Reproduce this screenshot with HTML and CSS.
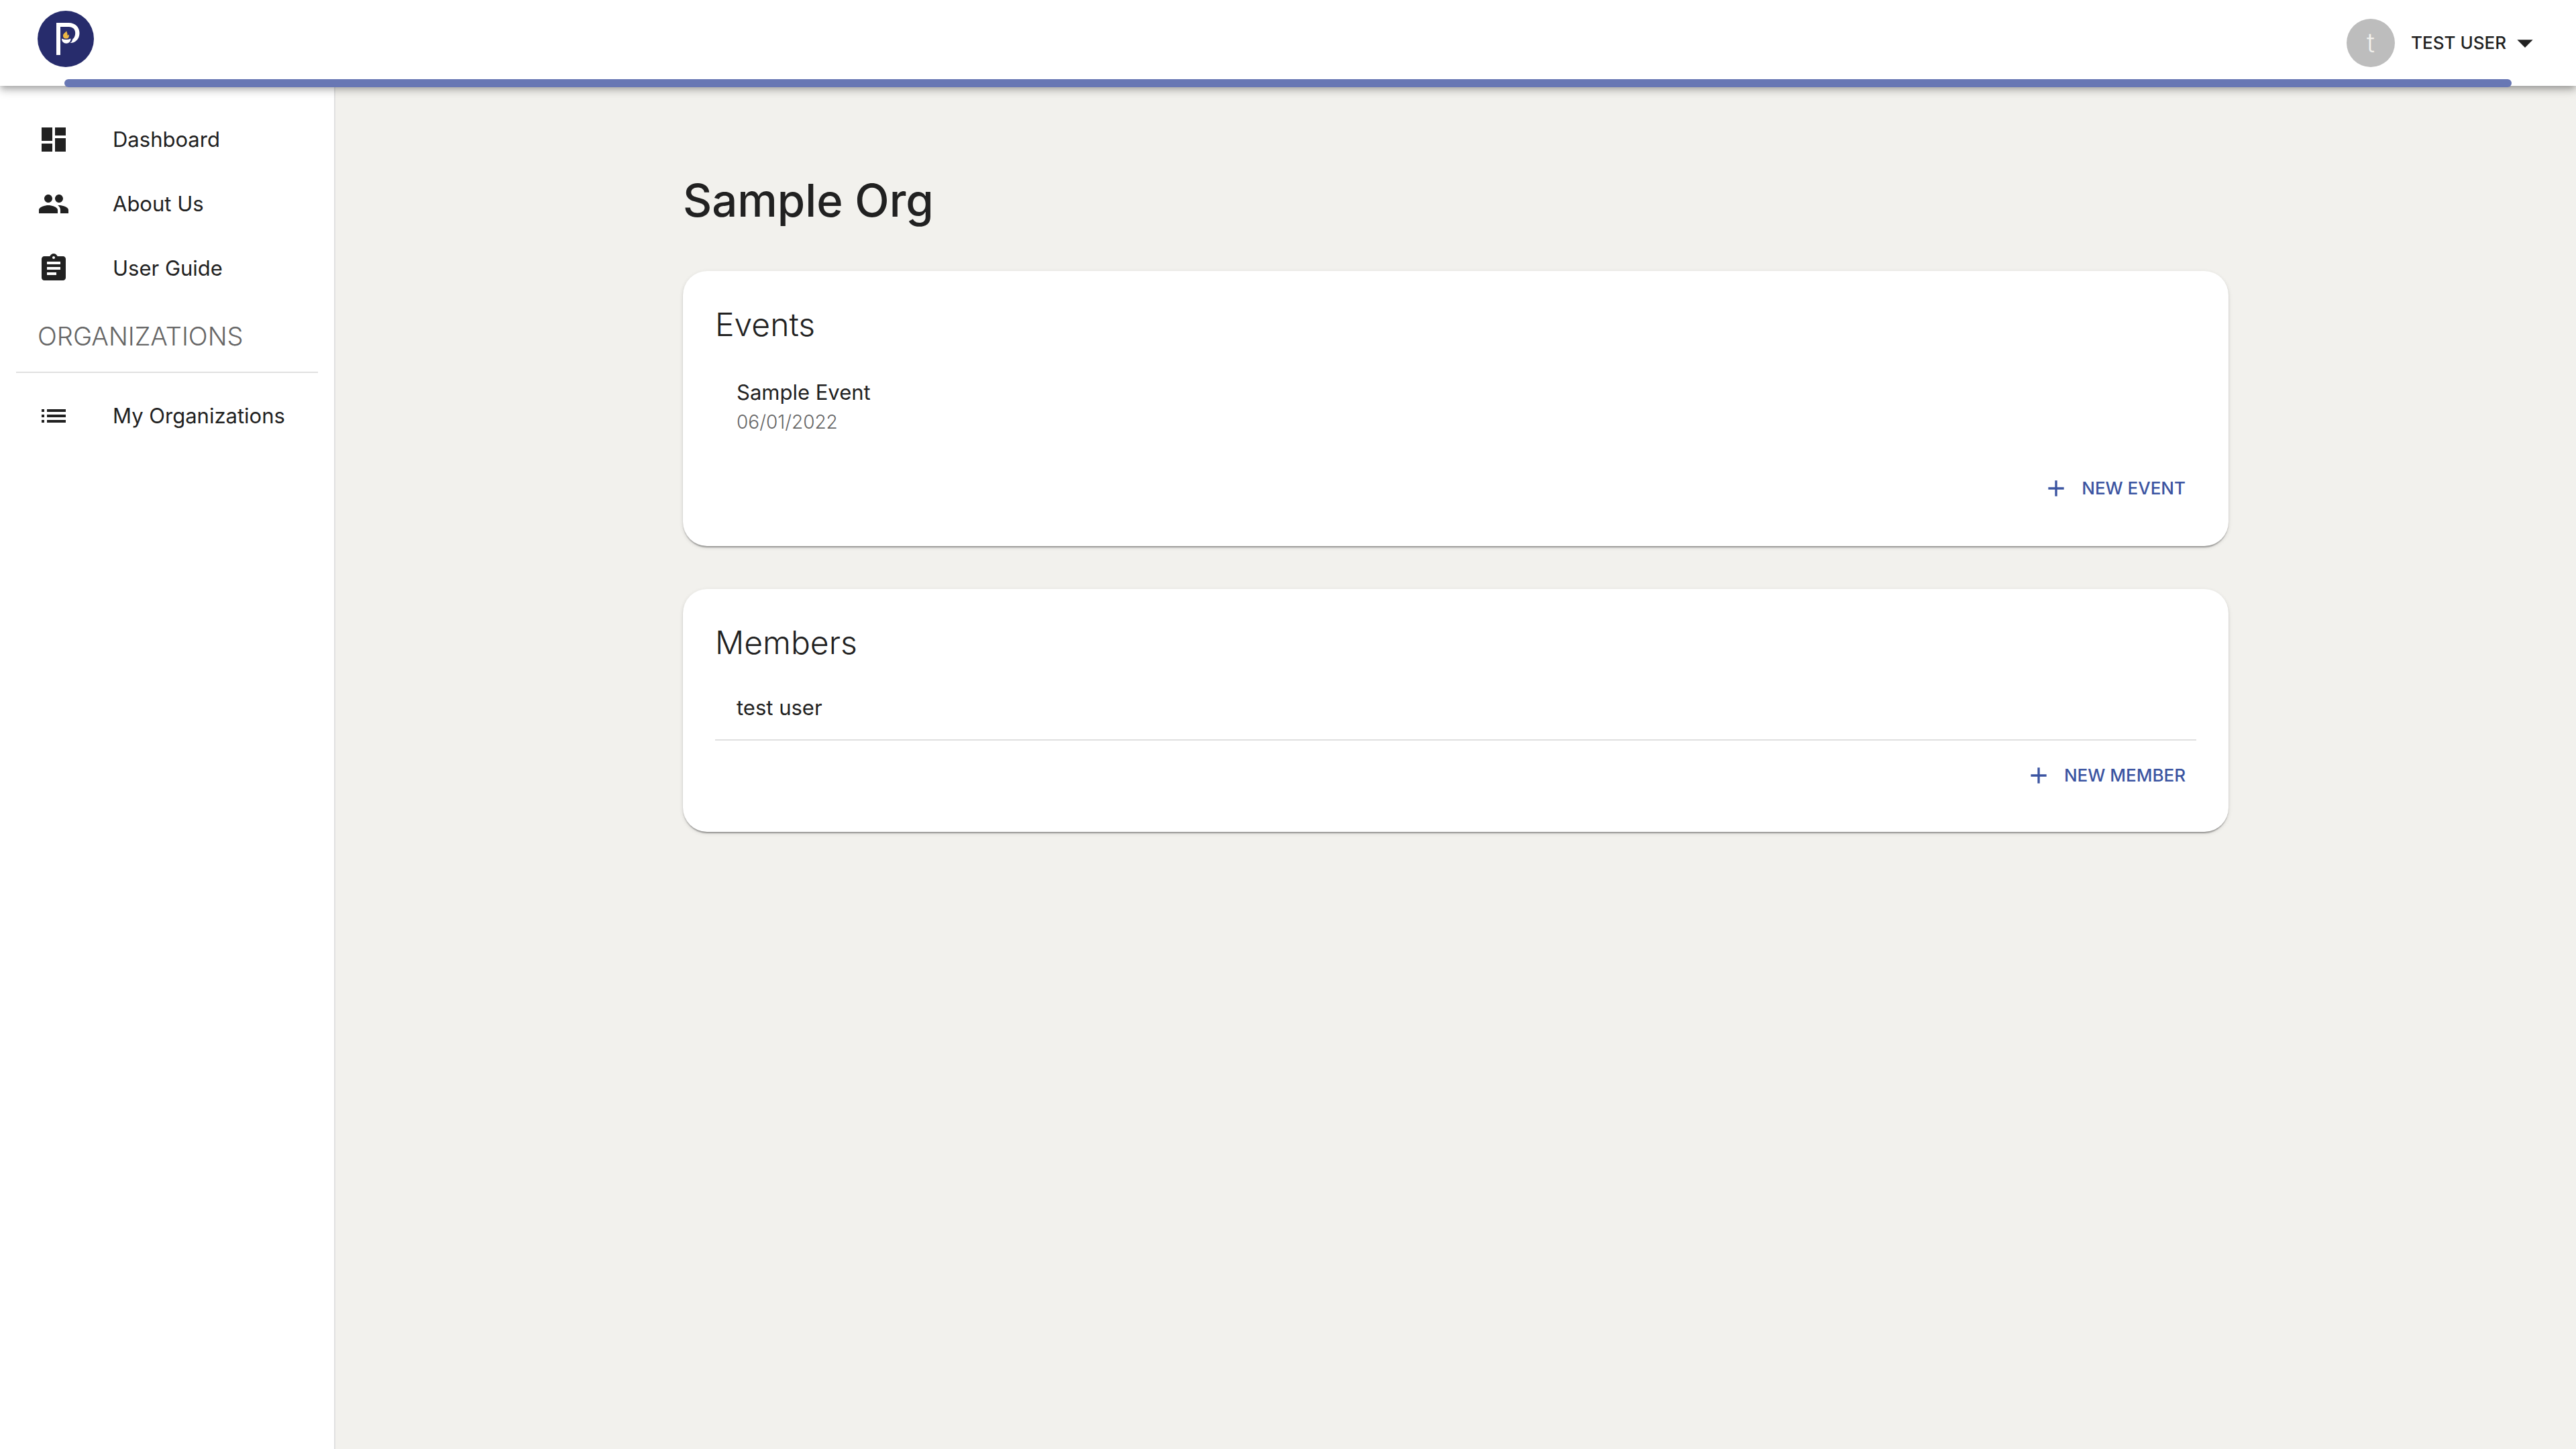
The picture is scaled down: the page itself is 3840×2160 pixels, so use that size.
FILE: index.html
```html
<!DOCTYPE html>
<html lang="en">
<head>
<meta charset="utf-8">
<title>Sample Org</title>
<link rel="stylesheet" href="styles.css">
</head>
<body>
<header class="topbar">
  <a class="logo" href="#" aria-label="Home">
    <svg viewBox="0 0 84 84" aria-hidden="true">
      <circle cx="42" cy="42" r="42" fill="#272c6c"/>
      <path fill="#fff" d="M28 18h18.500c9.500 0 16 6.500 16 15.200 0 8.800-6.200 15.300-14.200 14.800 2.600-1.100 3.300-3.400 4-5.800 2.600-1.800 3.900-5.100 3.900-9 0-5.500-3.700-9.200-9.700-9.200H34v42h-6z"/>
      <path fill="#fff" d="M36 41.500q6.500 3.200 13.500 0c0 4.500-2.800 7.200-6.700 7.200S36 46 36 41.500z"/>
      <path fill="#ecb844" d="M43 30c.6 2.800 2 3.700 1.500 6.600 1.100.2 1.700-.3 2.100-1.300.8 2.400.5 6.300-4.100 6.300-3.300 0-4.800-2.300-4.500-4.900.3-3 3.900-3.800 5-6.700z"/>
    </svg>
  </a>
  <button class="account" type="button">
    <span class="avatar">t</span>
    <span class="account-name">TEST USER</span>
    <svg class="caret" viewBox="0 0 24 24" aria-hidden="true"><path d="M7 10l5 5 5-5z"/></svg>
  </button>
  <div class="topbar-line"></div>
</header>
<div class="shell">
  <nav class="sidebar">
    <a class="nav-item" href="#">
      <svg class="nav-icon" viewBox="0 0 24 24" aria-hidden="true"><path d="M3 13h8V3H3v10zm0 8h8v-6H3v6zm10 0h8V11h-8v10zm0-18v6h8V3h-8z"/></svg>
      <span>Dashboard</span>
    </a>
    <a class="nav-item" href="#">
      <svg class="nav-icon" viewBox="0 0 24 24" aria-hidden="true"><path d="M16 11c1.660 0 2.990-1.340 2.990-3S17.660 5 16 5c-1.660 0-3 1.340-3 3s1.340 3 3 3zm-8 0c1.660 0 2.990-1.340 2.990-3S9.660 5 8 5C6.340 5 5 6.340 5 8s1.340 3 3 3zm0 2c-2.330 0-7 1.170-7 3.500V19h14v-2.500c0-2.330-4.670-3.500-7-3.500zm8 0c-.29 0-.62.020-.97.050 1.160.84 1.970 1.970 1.970 3.450V19h6v-2.500c0-2.330-4.670-3.500-7-3.500z"/></svg>
      <span>About Us</span>
    </a>
    <a class="nav-item" href="#">
      <svg class="nav-icon" viewBox="0 0 24 24" aria-hidden="true"><path d="M19 3h-4.180C14.400 1.840 13.300 1 12 1c-1.300 0-2.400.84-2.820 2H5c-1.100 0-2 .9-2 2v14c0 1.100.9 2 2 2h14c1.100 0 2-.9 2-2V5c0-1.100-.9-2-2-2zm-7 0c.55 0 1 .45 1 1s-.45 1-1 1-1-.45-1-1 .45-1 1-1zm2 14H7v-2h7v2zm3-4H7v-2h10v2zm0-4H7V7h10v2z"/></svg>
      <span>User Guide</span>
    </a>
    <h2 class="nav-heading">ORGANIZATIONS</h2>
    <a class="nav-item" href="#">
      <svg class="nav-icon" viewBox="0 0 24 24" aria-hidden="true"><path d="M3 13h2v-2H3v2zm0 4h2v-2H3v2zm0-8h2V7H3v2zm4 4h14v-2H7v2zm0 4h14v-2H7v2zM7 7v2h14V7H7z"/></svg>
      <span>My Organizations</span>
    </a>
  </nav>
  <main class="content">
    <h1 class="page-title">Sample Org</h1>
    <section class="card card-events">
      <h2 class="card-title">Events</h2>
      <ul class="list">
        <li><a class="event" href="#"><span class="event-name">Sample Event</span><span class="event-date">06/01/2022</span></a></li>
      </ul>
      <div class="actions">
        <button class="add" type="button"><svg class="add-icon" viewBox="0 0 24 24" aria-hidden="true"><path d="M19 13h-6v6h-2v-6H5v-2h6V5h2v6h6v2z"/></svg>NEW EVENT</button>
      </div>
    </section>
    <section class="card">
      <h2 class="card-title">Members</h2>
      <ul class="list">
        <li class="member">test user</li>
      </ul>
      <div class="actions">
        <button class="add" type="button"><svg class="add-icon" viewBox="0 0 24 24" aria-hidden="true"><path d="M19 13h-6v6h-2v-6H5v-2h6V5h2v6h6v2z"/></svg>NEW MEMBER</button>
      </div>
    </section>
  </main>
</div>
</body>
</html>
```
FILE: styles.css
```css
* {
  box-sizing: border-box;
}

body {
  margin: 0;
  min-height: 100vh;
  display: flex;
  flex-direction: column;
  background: #f2f1ed;
  color: #212121;
  font-family: Inter, "Open Sans", sans-serif;
  font-size: 31px;
  font-weight: 400;
  line-height: 50px;
}

a {
  color: inherit;
  text-decoration: none;
}

button {
  padding: 0;
  border: 0;
  background: none;
  font: inherit;
  color: inherit;
  cursor: pointer;
}

h1,
h2,
ul {
  margin: 0;
  padding: 0;
  font-weight: inherit;
  list-style: none;
}

svg {
  display: block;
  fill: currentColor;
}

/* Top bar */
.topbar {
  position: relative;
  z-index: 1;
  height: 128px;
  display: flex;
  align-items: center;
  justify-content: space-between;
  padding: 0 48px 0 56px;
  background: #fff;
  box-shadow: 0 4px 8px -2px rgba(0, 0, 0, 0.2), 0 8px 10px 0 rgba(0, 0, 0, 0.14), 0 2px 20px 0 rgba(0, 0, 0, 0.12);
}

.logo {
  width: 84px;
  height: 84px;
  margin-bottom: 12px;
}

.topbar-line {
  position: absolute;
  left: 96px;
  right: 96px;
  bottom: -2px;
  height: 12px;
  border-radius: 6px;
  background: #6877b4;
}

.account {
  display: flex;
  align-items: center;
  font-size: 26px;
  font-weight: 500;
}

.avatar {
  width: 72px;
  height: 72px;
  margin-right: 24px;
  border-radius: 50%;
  background: #bdbdbd;
  color: #f2f1ed;
  font-size: 40px;
  font-weight: 300;
  line-height: 72px;
  text-align: center;
}

.caret {
  width: 56px;
  height: 56px;
}

/* Page body */
.shell {
  flex: 1;
  display: flex;
}

.sidebar {
  flex: 0 0 500px;
  padding-top: 32px;
  background: #fff;
  border-right: 2px solid #e0e0e0;
}

.nav-item {
  display: flex;
  align-items: center;
  height: 96px;
  padding: 0 56px;
  gap: 64px;
  white-space: nowrap;
}

.nav-icon {
  flex: none;
  width: 48px;
  height: 48px;
}

.nav-heading {
  margin: 0 24px 16px;
  padding: 24px 32px;
  height: 108px;
  border-bottom: 2px solid #e0e0e0;
  color: #666;
  font-size: 38px;
  font-weight: 300;
  line-height: 58px;
}

.content {
  flex: 1;
  max-width: 2400px;
  margin: 0 auto;
  padding: 128px 48px;
}

.page-title {
  margin-bottom: 62px;
  font-size: 67px;
  font-weight: 500;
  line-height: 86px;
}

.card {
  padding: 48px;
  border-radius: 36px;
  background: #fff;
  box-shadow: 0 4px 2px -2px rgba(0, 0, 0, 0.2), 0 2px 2px 0 rgba(0, 0, 0, 0.14), 0 2px 6px 0 rgba(0, 0, 0, 0.12);
}

.card + .card {
  margin-top: 64px;
}

.card-events {
  padding-bottom: 50px;
}

.card-title {
  margin-bottom: 16px;
  font-size: 48px;
  font-weight: 300;
  line-height: 64px;
}

.event {
  display: flex;
  flex-direction: column;
  padding: 28px 32px;
}

.event-date {
  color: #666;
  font-size: 28px;
  font-weight: 300;
  line-height: 38px;
}

.member {
  padding: 24px 32px 22px;
  border-bottom: 2px solid #e0e0e0;
}

.actions {
  display: flex;
  justify-content: flex-end;
  margin-top: 16px;
}

.add {
  display: flex;
  align-items: center;
  gap: 18px;
  height: 72px;
  padding: 0 16px;
  color: #3b54a1;
  font-size: 26px;
  font-weight: 500;
}

.add-icon {
  width: 40px;
  height: 40px;
}
```
